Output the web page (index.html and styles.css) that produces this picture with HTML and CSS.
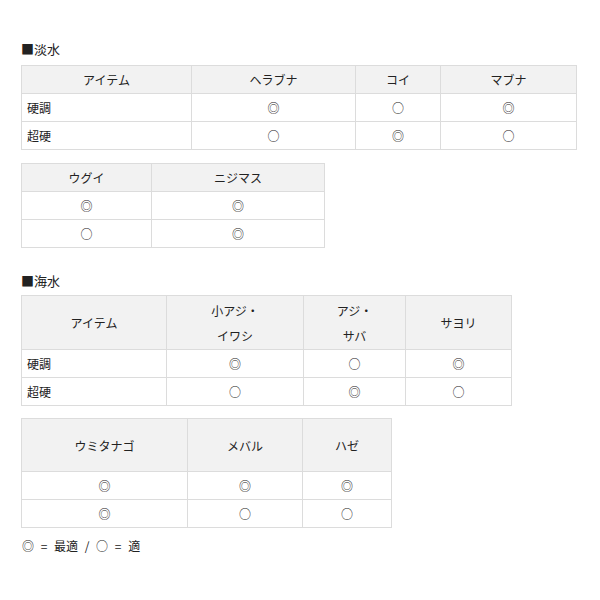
FILE: index.html
```html
<!DOCTYPE html>
<html lang="ja">
<head>
<meta charset="utf-8">
<link rel="stylesheet" href="styles.css">
</head>
<body>
<div class="page">
  <div class="title title-first">■淡水</div>
  <table class="grid t1">
    <colgroup><col class="c170"><col class="c164"><col class="c85"><col class="c135"></colgroup>
    <tr class="head"><th>アイテム</th><th>ヘラブナ</th><th>コイ</th><th>マブナ</th></tr>
    <tr><td class="label">硬調</td><td>◎</td><td>○</td><td>◎</td></tr>
    <tr><td class="label">超硬</td><td>○</td><td>◎</td><td>○</td></tr>
  </table>
  <table class="grid t2">
    <colgroup><col class="c130"><col class="c172"></colgroup>
    <tr class="head"><th>ウグイ</th><th>ニジマス</th></tr>
    <tr><td>◎</td><td>◎</td></tr>
    <tr><td>○</td><td>◎</td></tr>
  </table>

  <div class="title title-second">■海水</div>
  <table class="grid t3">
    <colgroup><col class="c145"><col class="c137"><col class="c102"><col class="c105"></colgroup>
    <tr class="head tall"><th>アイテム</th><th>小アジ・<br>イワシ</th><th>アジ・<br>サバ</th><th>サヨリ</th></tr>
    <tr><td class="label">硬調</td><td>◎</td><td>○</td><td>◎</td></tr>
    <tr><td class="label">超硬</td><td>○</td><td>◎</td><td>○</td></tr>
  </table>
  <table class="grid t4">
    <colgroup><col class="c166"><col class="c115"><col class="c88"></colgroup>
    <tr class="head tall short"><th>ウミタナゴ</th><th>メバル</th><th>ハゼ</th></tr>
    <tr><td>◎</td><td>◎</td><td>◎</td></tr>
    <tr><td>◎</td><td>○</td><td>○</td></tr>
  </table>
  <div class="legend">◎ = 最適 / ○ = 適</div>
</div>
</body>
</html>
```
FILE: styles.css
```css
html, body {
  margin: 0;
  padding: 0;
  background: #fff;
}
body {
  font-family: "Noto Sans CJK JP", "DejaVu Sans", sans-serif;
  font-size: 12px;
  color: #222;
}
.page {
  padding: 40px 0 0 21px;
}
.title {
  font-size: 13px;
  line-height: 18px;
  height: 18px;
  margin-bottom: 7px;
}
.title-second {
  margin-top: 24px;
  margin-bottom: 5px;
}
.grid {
  border-collapse: collapse;
  table-layout: fixed;
}
.grid th,
.grid td {
  border: 1px solid #dcdcdc;
  height: 28px;
  padding: 0 5px;
  text-align: center;
  font-weight: normal;
  line-height: 25px;
  box-sizing: border-box;
  color: #222;
}
.grid .head th {
  background: #f2f2f2;
}
.grid .head.tall th {
  height: 54px;
}
.grid .head.short th {
  height: 53px;
}
.grid td.label {
  text-align: left;
}
.t1 { width: 555px; }
.t2 { width: 303px; margin-top: 13px; }
.t3 { width: 490px; }
.t4 { width: 370px; margin-top: 12px; }
.c170 { width: 170px; }
.c164 { width: 164px; }
.c85 { width: 85px; }
.c135 { width: 136px; }
.c130 { width: 130px; }
.c172 { width: 173px; }
.c145 { width: 145px; }
.c137 { width: 137px; }
.c102 { width: 102px; }
.c105 { width: 106px; }
.c166 { width: 166px; }
.c115 { width: 115px; }
.c88 { width: 89px; }
.legend {
  margin-top: 9px;
  line-height: 18px;
  padding-left: 1px;
  word-spacing: 4px;
}
```
